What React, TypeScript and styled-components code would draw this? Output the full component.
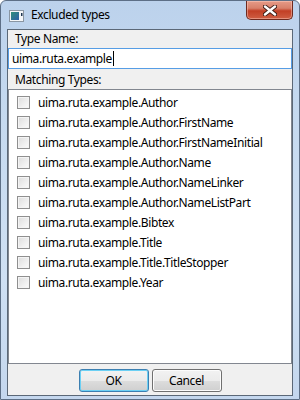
import React from "react";
import styled, { createGlobalStyle } from "styled-components";

const GlobalStyle = createGlobalStyle`
  html, body {
    margin: 0;
    padding: 0;
    background: #ffffff;
  }
  body {
    font-family: "Noto Sans", "Open Sans", sans-serif;
    font-size: 12px;
    letter-spacing: -0.38px;
    color: #000;
  }
`;

const types = [
  "uima.ruta.example.Author",
  "uima.ruta.example.Author.FirstName",
  "uima.ruta.example.Author.FirstNameInitial",
  "uima.ruta.example.Author.Name",
  "uima.ruta.example.Author.NameLinker",
  "uima.ruta.example.Author.NameListPart",
  "uima.ruta.example.Bibtex",
  "uima.ruta.example.Title",
  "uima.ruta.example.Title.TitleStopper",
  "uima.ruta.example.Year",
];

export default function App() {
  return (
    <>
      <GlobalStyle />
      <Window>
        <TitleBar>
          <AppIcon width="16" height="16" viewBox="0 0 16 16">
            <defs>
              <linearGradient id="ic" x1="0" y1="0" x2="1" y2="1">
                <stop offset="0" stopColor="#2f8f7a" />
                <stop offset="1" stopColor="#2c5fa8" />
              </linearGradient>
            </defs>
            <rect x="0.5" y="2.5" width="14" height="11" fill="#f4f6f8" stroke="#8a96a3" />
            <rect x="2" y="4" width="8" height="8" fill="url(#ic)" />
            <rect x="12" y="5" width="1.5" height="3" fill="#1d3550" />
          </AppIcon>
          <Title>Excluded types</Title>
          <CloseButton>
            <svg width="14" height="11" viewBox="0 0 14 11">
              <path
                d="M2 1.5 L12 9.5 M12 1.5 L2 9.5"
                stroke="#3b1a14"
                strokeWidth="4.2"
                strokeLinecap="round"
              />
              <path
                d="M2 1.5 L12 9.5 M12 1.5 L2 9.5"
                stroke="#ffffff"
                strokeWidth="2.4"
                strokeLinecap="round"
              />
            </svg>
          </CloseButton>
        </TitleBar>
        <Client>
          <Label>Type Name:</Label>
          <Input>
            uima.ruta.example<Caret />
          </Input>
          <SectionLabel>Matching Types:</SectionLabel>
          <List>
            {types.map((t) => (
              <Row key={t}>
                <CheckBox />
                <RowText>{t}</RowText>
              </Row>
            ))}
          </List>
          <ButtonBar>
            <Button $default>OK</Button>
            <Button>Cancel</Button>
          </ButtonBar>
        </Client>
      </Window>
    </>
  );
}

const Window = styled.div`
  width: 300px;
  height: 400px;
  box-sizing: border-box;
  border: 1px solid #5d6f86;
  border-radius: 6px 6px 0 0;
  background: linear-gradient(to bottom, #bcd2ec 0%, #c6daf0 30%, #cfe0f3 70%, #c4d7ee 100%);
  display: flex;
  flex-direction: column;
  padding: 0 6px 3px 6px;
`;

const TitleBar = styled.div`
  height: 28px;
  display: flex;
  align-items: flex-start;
`;

const AppIcon = styled.svg`
  margin: 7px 0 0 2px;
  flex: none;
`;

const Title = styled.div`
  margin: 6px 0 0 6px;
  font-size: 12px;
  line-height: 16px;
  color: #000;
`;

const CloseButton = styled.div`
  margin-left: auto;
  margin-right: 0;
  width: 47px;
  height: 19px;
  box-sizing: border-box;
  border: 1px solid #6e2a1f;
  border-top: none;
  border-radius: 0 0 5px 5px;
  background: linear-gradient(to bottom, #e69b88 0%, #d8806a 40%, #c23f25 55%, #cf5e43 100%);
  display: flex;
  align-items: center;
  justify-content: center;
  box-shadow: inset 0 0 0 1px rgba(255, 210, 200, 0.45);
`;

const Client = styled.div`
  flex: 1;
  border: 1px solid #5b6877;
  background: #f0f0f0;
  display: flex;
  flex-direction: column;
  min-height: 0;
`;

const Label = styled.div`
  height: 18px;
  padding-left: 7px;
  line-height: 17px;
`;

const Input = styled.div`
  height: 21px;
  box-sizing: border-box;
  border: 1px solid #569de5;
  background: #fff;
  padding-left: 3px;
  line-height: 18px;
  display: flex;
  align-items: center;
`;

const Caret = styled.span`
  display: inline-block;
  width: 1px;
  height: 15px;
  margin-left: 1px;
  background: #000;
`;

const SectionLabel = styled.div`
  height: 20px;
  padding-left: 7px;
  line-height: 21px;
`;

const List = styled.div`
  height: 275px;
  box-sizing: border-box;
  border: 1px solid #828790;
  background: #fff;
  padding: 2px 0 0 8px;
`;

const Row = styled.div`
  height: 20px;
  display: flex;
  align-items: center;
`;

const CheckBox = styled.span`
  width: 13px;
  height: 13px;
  box-sizing: border-box;
  border: 1px solid #8f8f8f;
  background: linear-gradient(135deg, #dcdcdc 0%, #f0f0f0 60%, #fbfbfb 100%);
  box-shadow: inset 0 0 0 1px #f4f4f4;
  flex: none;
`;

const RowText = styled.span`
  margin-left: 8px;
  white-space: nowrap;
`;

const ButtonBar = styled.div`
  flex: 1;
  display: flex;
  justify-content: center;
  gap: 3px;
  padding-top: 5px;
`;

const Button = styled.div<{ $default?: boolean }>`
  width: 70px;
  height: 23px;
  box-sizing: border-box;
  border: 1px solid ${(p) => (p.$default ? "#3c7fb1" : "#707070")};
  border-radius: 3px;
  background: linear-gradient(to bottom, #f2f2f2 0%, #ebebeb 50%, #dddddd 51%, #cfcfcf 100%);
  box-shadow: inset 0 0 0 1px ${(p) => (p.$default ? "#6cd0f4" : "#fcfcfc")};
  display: flex;
  align-items: center;
  justify-content: center;
  font-size: 12px;
`;
